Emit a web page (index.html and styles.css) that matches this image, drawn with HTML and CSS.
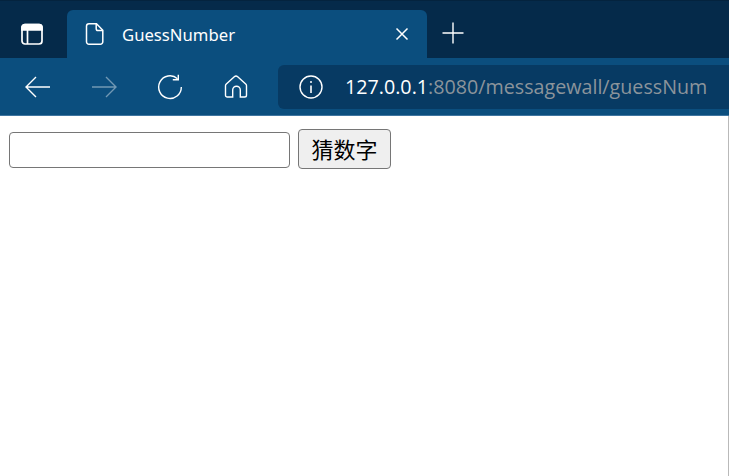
FILE: index.html
```html
<!DOCTYPE html>
<html lang="zh">
<head>
<meta charset="utf-8">
<title>GuessNumber</title>
<link rel="stylesheet" href="styles.css">
</head>
<body>
<div class="browser">
  <div class="tabstrip">
    <div class="tabactions">
      <svg class="icon" width="24" height="24" viewBox="0 0 24 24" fill="none" stroke="#fff" stroke-width="1.700"><path d="M5 2.500h14a3 3 0 0 1 3 3V8H2V5.500a3 3 0 0 1 3-3z" fill="#fff"/><rect x="2" y="2.500" width="20" height="19.500" rx="3"/><path d="M7.500 8v14"/></svg>
    </div>
    <div class="tab">
      <svg class="tabicon" width="20" height="24" viewBox="0 0 20 24" fill="none" stroke="#fff" stroke-width="1.500"><path d="M4 1.700h7.500l6.300 6.500v11.600a2.500 2.500 0 0 1-2.500 2.500H4a2.500 2.500 0 0 1-2.500-2.500V4.200A2.500 2.500 0 0 1 4 1.700z"/><path d="M11.200 1.700v5a1.800 1.800 0 0 0 1.800 1.800h4.800"/></svg>
      <span class="tabtitle">GuessNumber</span>
      <svg class="tabclose" width="14" height="14" viewBox="0 0 14 14" stroke="#fff" stroke-width="1.500"><path d="M1.500 1.500l11 11M12.500 1.500l-11 11"/></svg>
    </div>
    <svg class="newtab" width="22" height="22" viewBox="0 0 22 22" stroke="#fff" stroke-width="1.400"><path d="M11 .5v21M.5 11h21"/></svg>
  </div>
  <div class="toolbar">
    <div class="navbtn">
      <svg width="28" height="24" viewBox="0 0 28 24" fill="none" stroke="#fff" stroke-width="1.400"><path d="M26 12H2.500M12 2 2 12l10 10"/></svg>
    </div>
    <div class="navbtn dim">
      <svg width="28" height="24" viewBox="0 0 28 24" fill="none" stroke="#fff" stroke-width="1.400"><path d="M2 12h23.500M16 2l10 10-10 10"/></svg>
    </div>
    <div class="navbtn">
      <svg width="26" height="26" viewBox="0 0 26 26" fill="none" stroke="#fff" stroke-width="1.400"><path d="M20.500 4.700A11.300 11.300 0 1 0 24.300 13"/><path d="M21.300 .8v5h-5.500"/></svg>
    </div>
    <div class="navbtn">
      <svg width="24" height="24" viewBox="0 0 24 24" fill="none" stroke="#fff" stroke-width="1.400"><path d="M10.300 1.700a2.500 2.500 0 0 1 3.400 0l8 7.200a2.500 2.500 0 0 1 .8 1.900v9.400a1.800 1.800 0 0 1-1.800 1.800h-4.400V15a3.800 3.800 0 0 0-7.600 0v7H3.300a1.800 1.800 0 0 1-1.800-1.800v-9.400a2.500 2.500 0 0 1 .8-1.900z"/></svg>
    </div>
    <div class="addressbar">
      <svg class="infoicon" width="24" height="24" viewBox="0 0 24 24" fill="none" stroke="#fff" stroke-width="1.400"><circle cx="12" cy="12" r="11"/><path d="M12 10.500v7.500" stroke-width="1.600"/><circle cx="12" cy="7" r="1" fill="#fff" stroke="none"/></svg>
      <div class="url"><span class="host">127.0.0.1</span><span class="path">:8080/messagewall/guessNum</span></div>
    </div>
  </div>
  <main class="page">
    <input class="guess" type="text">
    <button class="submit" type="button">猜数字</button>
  </main>
</div>
</body>
</html>
```

FILE: styles.css
```css
html, body {
  margin: 0;
  height: 100%;
  overflow: hidden;
}

.browser {
  display: flex;
  flex-direction: column;
  height: 476px;
  width: 729px;
  font-family: "Open Sans", "Noto Sans", sans-serif;
}

.tabstrip {
  display: flex;
  align-items: flex-start;
  height: 58px;
  flex: none;
  box-sizing: border-box;
  background: #052a4a;
  border-top: 1px solid #04233e;
  padding-top: 9px;
}

.tabactions {
  display: flex;
  align-items: center;
  justify-content: center;
  width: 67px;
  height: 48px;
  padding-right: 3px;
  box-sizing: border-box;
}

.icon, .tabicon, .tabclose, .newtab {
  flex: none;
}

.tab {
  display: flex;
  align-items: center;
  width: 360px;
  height: 48px;
  padding-left: 18px;
  padding-right: 18px;
  box-sizing: border-box;
  background: #0b4e7e;
  border-radius: 6px 6px 0 0;
  color: #fff;
}

.tabtitle {
  flex: 1;
  margin-left: 17px;
  font-family: "Noto Sans", "Open Sans", sans-serif;
  font-size: 16.700px;
  white-space: nowrap;
}

.newtab {
  margin-left: 15px;
  margin-top: 12px;
}

.toolbar {
  display: flex;
  align-items: center;
  height: 58px;
  flex: none;
  box-sizing: border-box;
  background: #0b4e7e;
  border-bottom: 1px solid #3f75a0;
  padding-left: 5px;
}

.navbtn {
  display: flex;
  align-items: center;
  justify-content: center;
  width: 66px;
  height: 44px;
  flex: none;
}

.dim svg {
  opacity: 0.42;
}

.addressbar {
  display: flex;
  align-items: center;
  flex: 1;
  min-width: 0;
  height: 44px;
  margin-left: 9px;
  padding-left: 21px;
  background: #073a63;
  border-radius: 6px 0 0 6px;
}

.infoicon {
  flex: none;
}

.url {
  margin-left: 22px;
  font-family: "Open Sans", "Noto Sans", sans-serif;
  font-size: 19.700px;
  white-space: nowrap;
}

.host {
  color: #fff;
}

.path {
  color: #8b949b;
}

.page {
  flex: 1;
  display: flex;
  align-items: flex-start;
  align-self: stretch;
  align-content: flex-start;
  flex-wrap: wrap;
  gap: 8px;
  box-sizing: border-box;
  padding: 13px 0 0 9px;
  background: #fff;
  border-right: 1px solid #b9b9b9;
}

.guess {
  width: 281px;
  height: 36px;
  box-sizing: border-box;
  margin: 3px 0 0;
  padding: 0 3px;
  background: #fff;
  border: 1px solid #767676;
  border-radius: 4px;
}

.submit {
  width: 93px;
  height: 40px;
  box-sizing: border-box;
  margin: 0;
  padding: 0 0 2px;
  background: #efefef;
  border: 1px solid #767676;
  border-radius: 4px;
  color: #000;
  font-family: "Noto Sans CJK SC", sans-serif;
  font-size: 22px;
  line-height: 1;
}
```
